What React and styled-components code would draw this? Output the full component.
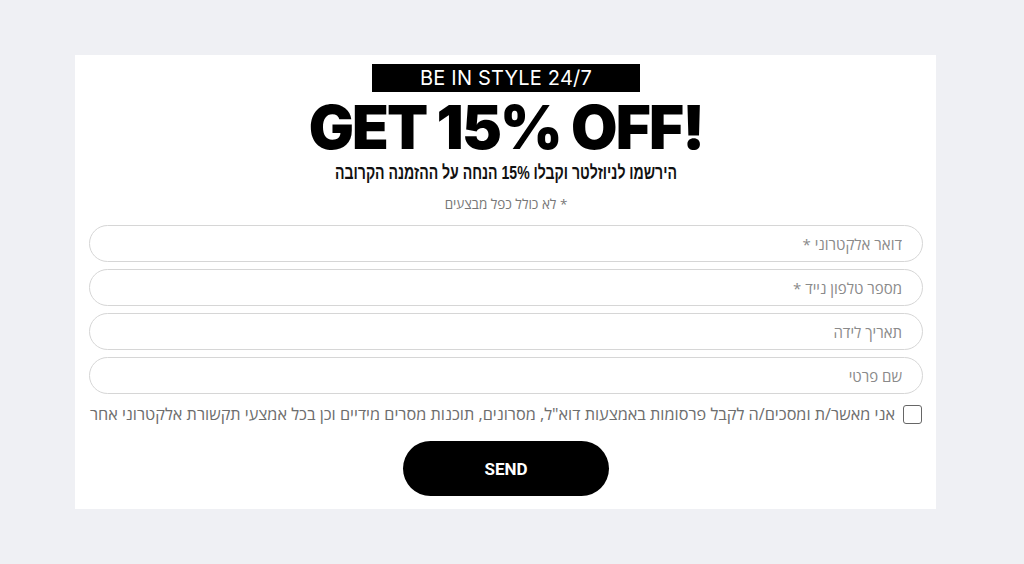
import React, { useLayoutEffect } from 'react';
import styled, { createGlobalStyle } from 'styled-components';

const Global = createGlobalStyle`
	html { overflow-y: scroll; }
	body {
		margin: 0;
		background: #eff0f4;
		font-family: "Open Sans", "Noto Sans", sans-serif;
	}
`;

const Page = () => {
	useLayoutEffect(() => {
		window.scrollTo(0, document.body.scrollHeight);
	}, []);

	return (
		<>
			<Global />
			<Above />
			<Wrap>
				<Card>
					<Banner>BE IN STYLE 24/7</Banner>
					<Headline>GET 15% OFF!</Headline>
					<SubLine>הירשמו לניוזלטר וקבלו 15% הנחה על ההזמנה הקרובה</SubLine>
					<Note>* לא כולל כפל מבצעים</Note>
					<Form dir="rtl" onSubmit={e => e.preventDefault()}>
						<Field type="text" inputMode="email" placeholder="דואר אלקטרוני *" />
						<Field type="text" inputMode="tel" placeholder="מספר טלפון נייד *" />
						<Field type="text" placeholder="תאריך לידה" />
						<Field type="text" placeholder="שם פרטי" />
						<Consent>
							<Box type="checkbox" />
							<span>אני מאשר/ת ומסכים/ה לקבל פרסומות באמצעות דוא"ל, מסרונים, תוכנות מסרים מידיים וכן בכל אמצעי תקשורת אלקטרוני אחר</span>
						</Consent>
						<Send type="submit">SEND</Send>
					</Form>
				</Card>
			</Wrap>
		</>
	);
};

export default Page;

// styles
const Above = styled.div`
	height: 5200px;
`
const Wrap = styled.div`
	padding: 0 88px 55px 75px;
`
const Card = styled.div`
	background: #fff;
	display: flex;
	flex-direction: column;
	align-items: center;
	padding: 9px 13px 13px 14px;
`
const Banner = styled.div`
	background: #000;
	color: #fff;
	width: 268px;
	height: 28px;
	display: flex;
	align-items: center;
	justify-content: center;
	font-family: "Inter", sans-serif;
	font-size: 20px;
	font-weight: 400;
	letter-spacing: 0.2px;
`
const Headline = styled.div`
	font-family: "Inter", sans-serif;
	font-weight: 900;
	font-size: 60px;
	line-height: 66px;
	margin-top: 2px;
	letter-spacing: -1.8px;
	color: #000;
`
const SubLine = styled.div`
	direction: rtl;
	display: inline-block;
	font-family: "Liberation Sans", "Noto Sans", sans-serif;
	font-weight: 700;
	font-size: 19px;
	line-height: 24px;
	color: #111;
	margin-top: 1px;
	transform: scaleX(0.74);
`
const Note = styled.div`
	direction: rtl;
	font-size: 13.5px;
	color: #777;
	margin-top: 10px;
	line-height: 18px;
`
const Form = styled.form`
	width: 100%;
	display: flex;
	flex-direction: column;
	align-items: stretch;
	gap: 7px;
	margin-top: 12px;
`
const Field = styled.input`
	box-sizing: border-box;
	height: 37px;
	border: 1px solid #d6d6d6;
	border-radius: 19px;
	padding: 0 20px;
	font-family: "Open Sans", sans-serif;
	font-size: 15px;
	color: #333;
	outline: none;
	&::placeholder { color: #8a8a8a; }
`
const Consent = styled.label`
	display: flex;
	align-items: center;
	gap: 8px;
	margin-top: 3px;
	font-size: 16.25px;
	line-height: 20px;
	color: #6d6d6d;
	white-space: nowrap;
`
const Box = styled.input`
	appearance: none;
	margin: 0 1px 0 0;
	width: 19px;
	height: 19px;
	border: 1px solid #666;
	border-radius: 3px;
	background: #fff;
	flex: none;
`
const Send = styled.button`
	align-self: center;
	width: 206px;
	height: 55px;
	margin-top: 10px;
	border: none;
	border-radius: 28px;
	background: #000;
	color: #fff;
	font-family: "Roboto", sans-serif;
	font-weight: 700;
	font-size: 17px;
	cursor: pointer;
`
